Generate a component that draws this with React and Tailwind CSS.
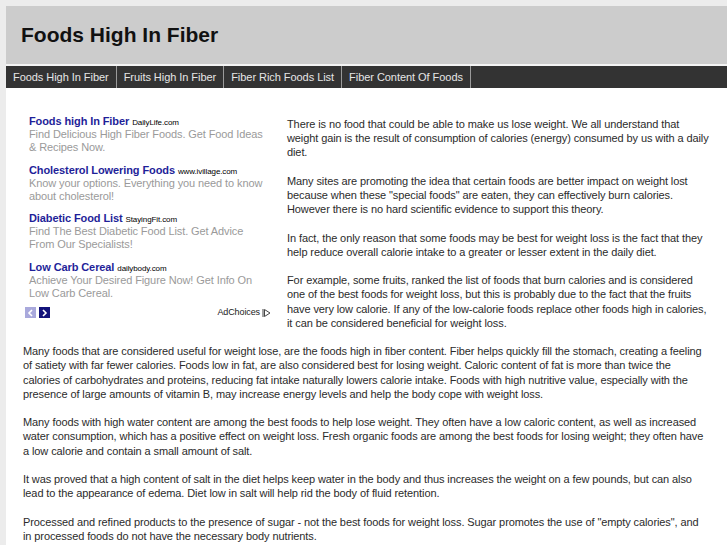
const navItems = [
  "Foods High In Fiber",
  "Fruits High In Fiber",
  "Fiber Rich Foods List",
  "Fiber Content Of Foods",
];

const ads = [
  {
    title: "Foods high In Fiber",
    site: "DailyLife.com",
    text: "Find Delicious High Fiber Foods. Get Food Ideas & Recipes Now.",
  },
  {
    title: "Cholesterol Lowering Foods",
    site: "www.ivillage.com",
    text: "Know your options. Everything you need to know about cholesterol!",
  },
  {
    title: "Diabetic Food List",
    site: "StayingFit.com",
    text: "Find The Best Diabetic Food List. Get Advice From Our Specialists!",
  },
  {
    title: "Low Carb Cereal",
    site: "dailybody.com",
    text: "Achieve Your Desired Figure Now! Get Info On Low Carb Cereal.",
  },
];

const sideParagraphs = [
  "There is no food that could be able to make us lose weight. We all understand that weight gain is the result of consumption of calories (energy) consumed by us with a daily diet.",
  'Many sites are promoting the idea that certain foods are better impact on weight lost because when these "special foods" are eaten, they can effectively burn calories. However there is no hard scientific evidence to support this theory.',
  "In fact, the only reason that some foods may be best for weight loss is the fact that they help reduce overall calorie intake to a greater or lesser extent in the daily diet.",
  "For example, some fruits, ranked the list of foods that burn calories and is considered one of the best foods for weight loss, but this is probably due to the fact that the fruits have very low calorie. If any of the low-calorie foods replace other foods high in calories, it can be considered beneficial for weight loss.",
];

const paragraphs = [
  "Many foods that are considered useful for weight lose, are the foods high in fiber content. Fiber helps quickly fill the stomach, creating a feeling of satiety with far fewer calories. Foods low in fat, are also considered best for losing weight. Caloric content of fat is more than twice the calories of carbohydrates and proteins, reducing fat intake naturally lowers calorie intake. Foods with high nutritive value, especially with the presence of large amounts of vitamin B, may increase energy levels and help the body cope with weight loss.",
  "Many foods with high water content are among the best foods to help lose weight. They often have a low caloric content, as well as increased water consumption, which has a positive effect on weight loss. Fresh organic foods are among the best foods for losing weight; they often have a low calorie and contain a small amount of salt.",
  "It was proved that a high content of salt in the diet helps keep water in the body and thus increases the weight on a few pounds, but can also lead to the appearance of edema. Diet low in salt will help rid the body of fluid retention.",
  'Processed and refined products to the presence of sugar - not the best foods for weight loss. Sugar promotes the use of "empty calories", and in processed foods do not have the necessary body nutrients.',
];

function AdUnit() {
  return (
    <div className="w-[250px] shrink-0">
      {ads.map((ad) => (
        <div key={ad.title} className="pl-[6px] pr-[7px] mb-[8.5px]">
          <div className="leading-[14px] whitespace-nowrap">
            <span className="text-[11px] leading-none font-bold text-[#1f1f99]">{ad.title}</span>{" "}
            <span className="text-[8px] leading-none text-black">{ad.site}</span>
          </div>
          <p className="text-[11px] leading-[13px] tracking-[-0.1px] text-[#9a9a9a]">{ad.text}</p>
        </div>
      ))}

      {/* pager + adchoices */}
      <div className="flex items-center justify-between pl-[2px] pr-[2px] mt-[-1px]">
        <div className="flex gap-[3px]">
          <span className="flex h-[11px] w-[11px] items-center justify-center bg-[#a9a9dc]">
            <svg width="7" height="8" viewBox="0 0 7 8">
              <path d="M5 1 L2 4 L5 7" fill="none" stroke="#fff" strokeWidth="1.6" />
            </svg>
          </span>
          <span className="flex h-[11px] w-[11px] items-center justify-center bg-[#12127a]">
            <svg width="7" height="8" viewBox="0 0 7 8">
              <path d="M2 1 L5 4 L2 7" fill="none" stroke="#fff" strokeWidth="1.6" />
            </svg>
          </span>
        </div>
        <div className="flex items-center gap-[2px] text-[9px] leading-none text-[#222]">
          <span>AdChoices</span>
          <svg width="9" height="10" viewBox="0 0 9 10">
            <path d="M1 1 V9" stroke="#444" strokeWidth="1" />
            <path d="M2.5 1.5 L8 5 L2.5 8.5 Z" fill="none" stroke="#444" strokeWidth="1" />
          </svg>
        </div>
      </div>
    </div>
  );
}

export default function App() {
  return (
    <div
      className="h-screen overflow-hidden bg-[#ececec] pt-[6px] pl-[6px] text-[#2b2b2b]"
      style={{ fontFamily: "'Liberation Sans', Arial, sans-serif" }}
    >
      {/* HEADER */}
      <div className="flex h-[58px] items-center bg-[#cccccc] pl-[15px] border-b-2 border-[#f3f3f3] box-content">
        <h1 className="text-[21px] font-bold text-[#111]">Foods High In Fiber</h1>
      </div>

      {/* NAV */}
      <div className="flex h-[22px] bg-[#333333]">
        {navItems.map((item) => (
          <a
            key={item}
            href="#"
            className="flex items-center px-[7px] border-r border-[#9a9a9a] text-[11px] tracking-[-0.05px] text-[#e6e6e6] whitespace-nowrap"
          >
            {item}
          </a>
        ))}
      </div>

      {/* CONTENT */}
      <div className="h-full bg-white pt-[26px] pl-[17px] pr-[17px] text-[11px] leading-[14.2px] tracking-[-0.1px]">
        <div className="flex">
          <AdUnit />
          <div className="ml-[14px] pt-[3px] flex-1">
            {sideParagraphs.map((p, i) => (
              <p key={i} className="mb-[14.2px]">
                {p}
              </p>
            ))}
          </div>
        </div>

        <div className="pr-[3px]">
          {paragraphs.map((p, i) => (
            <p key={i} className="mb-[14.2px]">
              {p}
            </p>
          ))}
        </div>
      </div>
    </div>
  );
}
